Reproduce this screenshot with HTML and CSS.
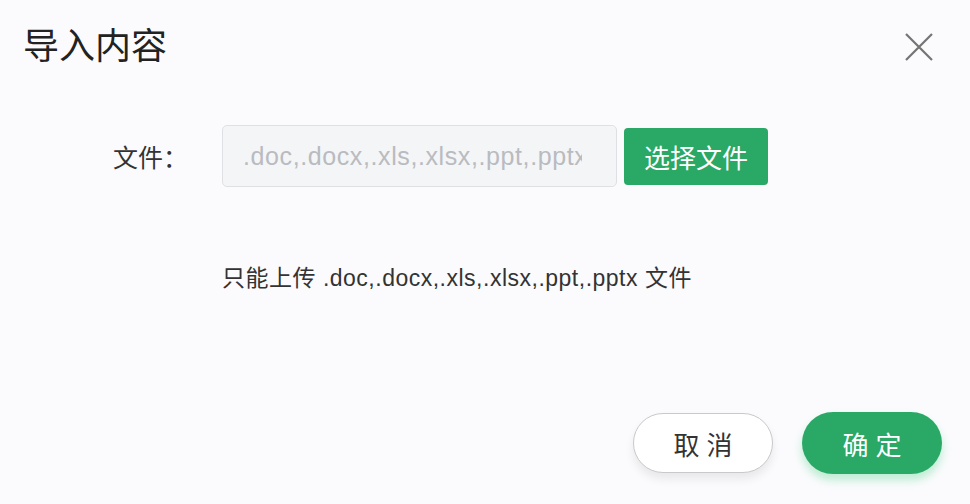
FILE: index.html
```html
<!DOCTYPE html>
<html lang="zh-CN">
<head>
  <meta charset="UTF-8">
  <title>导入内容</title>
  <link rel="stylesheet" href="styles.css">
</head>
<body>
  <div class="dialog">
    <!-- 标题栏 -->
    <div class="dialog-header">
      <h2 class="dialog-title">导入内容</h2>
      <button class="close-btn" aria-label="关闭">
        <svg width="28" height="28" viewBox="0 0 28 28">
          <path d="M1 1 L27 27 M27 1 L1 27" stroke="#747474" stroke-width="2.2" fill="none"/>
        </svg>
      </button>
    </div>

    <!-- 文件选择 -->
    <div class="file-row">
      <label class="file-label">文件：</label>
      <input class="file-input" type="text" placeholder=".doc,.docx,.xls,.xlsx,.ppt,.pptx" readonly>
      <button class="choose-btn">选择文件</button>
    </div>

    <p class="hint">只能上传 .doc,.docx,.xls,.xlsx,.ppt,.pptx 文件</p>

    <!-- 底部按钮 -->
    <div class="dialog-footer">
      <button class="btn btn-cancel">取 消</button>
      <button class="btn btn-ok">确 定</button>
    </div>
  </div>
</body>
</html>
```

FILE: styles.css
```css
/* 基础 */
body {
  margin: 0;
  background: #fbfbfd;
  font-family: "Liberation Sans", "Noto Sans CJK SC", sans-serif;
  color: #333;
}
.dialog {
  width: 970px;
  height: 504px;
  box-sizing: border-box;
  padding: 27px 28px 0 23px;
}
/* 标题栏 */
.dialog-header {
  display: flex;
  justify-content: space-between;
  align-items: flex-start;
}
.dialog-title {
  margin: 0;
  font-size: 36px;
  line-height: 40px;
  font-weight: normal;
  color: #222;
}
.close-btn {
  background: none;
  border: none;
  padding: 0;
  margin: 6px 9px 0 0;
  width: 28px;
  height: 28px;
  cursor: pointer;
}
.close-btn svg {
  display: block;
}
/* 文件选择行 */
.file-row {
  display: flex;
  align-items: center;
  margin-top: 58px;
  padding-left: 90px;
}
.file-label {
  width: 109px;
  font-size: 25px;
  color: #333;
}
.file-input {
  width: 395px;
  height: 62px;
  box-sizing: border-box;
  border: 1px solid #dfe0e4;
  border-radius: 5px;
  background: #f4f5f7;
  padding: 0 34px 0 20px;
  font-family: inherit;
  font-size: 25px;
  letter-spacing: 0.6px;
  outline: none;
}
.file-input::placeholder {
  color: #b9bbc0;
}
.choose-btn {
  margin-left: 7px;
  width: 144px;
  height: 57px;
  border: none;
  border-radius: 4px;
  background: #29a866;
  color: #fff;
  font-family: inherit;
  font-size: 26px;
  cursor: pointer;
}
/* 提示文字 */
.hint {
  margin: 76px 0 0 199px;
  font-size: 23px;
  line-height: 30px;
  letter-spacing: 0.5px;
  color: #333;
}
/* 底部按钮 */
.dialog-footer {
  display: flex;
  justify-content: flex-end;
  align-items: center;
  gap: 29px;
  margin-top: 119px;
}
.btn {
  height: 60px;
  border-radius: 31px;
  font-family: inherit;
  font-size: 26px;
  cursor: pointer;
}
.btn-cancel {
  width: 140px;
  background: #fff;
  border: 1px solid #c9c9cc;
  color: #333;
  box-shadow: 0 6px 10px rgba(0, 0, 0, 0.08);
}
.btn-ok {
  width: 140px;
  height: 62px;
  background: #29a866;
  border: none;
  color: #fff;
  box-shadow: 0 6px 10px rgba(41, 200, 110, 0.3);
}
```
